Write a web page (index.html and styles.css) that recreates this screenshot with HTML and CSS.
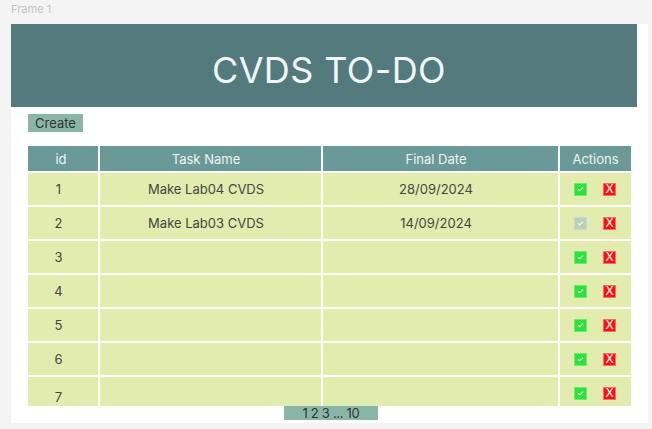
FILE: index.html
```html
<!DOCTYPE html>
<html>
<head>
<meta charset="utf-8">
<link rel="stylesheet" href="styles.css">
</head>
<body>
<div class="label">Frame 1</div>
<div class="frame">
  <header class="banner"><h1>CVDS TO-DO</h1></header>
  <button class="create">Create</button>
  <div class="table">
    <div class="th shift-s">id</div><div class="th shift">Task Name</div><div class="th shift">Final Date</div><div class="th">Actions</div>

    <div class="td shift">1</div><div class="td shift">Make Lab04 CVDS</div><div class="td shift">28/09/2024</div>
    <div class="td actions"><span class="ok"><svg viewBox="0 0 12 12"><polyline points="3.2,6.3 5.2,8 8.8,4.4"/></svg></span><span class="del">X</span></div>

    <div class="td shift">2</div><div class="td shift">Make Lab03 CVDS</div><div class="td shift">14/09/2024</div>
    <div class="td actions"><span class="ok done"><svg viewBox="0 0 12 12"><polyline points="3.2,6.3 5.2,8 8.8,4.4"/></svg></span><span class="del">X</span></div>

    <div class="td shift">3</div><div class="td"></div><div class="td"></div>
    <div class="td actions"><span class="ok"><svg viewBox="0 0 12 12"><polyline points="3.2,6.3 5.2,8 8.8,4.4"/></svg></span><span class="del">X</span></div>

    <div class="td shift">4</div><div class="td"></div><div class="td"></div>
    <div class="td actions"><span class="ok"><svg viewBox="0 0 12 12"><polyline points="3.2,6.3 5.2,8 8.8,4.4"/></svg></span><span class="del">X</span></div>

    <div class="td shift">5</div><div class="td"></div><div class="td"></div>
    <div class="td actions"><span class="ok"><svg viewBox="0 0 12 12"><polyline points="3.2,6.3 5.2,8 8.8,4.4"/></svg></span><span class="del">X</span></div>

    <div class="td shift">6</div><div class="td"></div><div class="td"></div>
    <div class="td actions"><span class="ok"><svg viewBox="0 0 12 12"><polyline points="3.2,6.3 5.2,8 8.8,4.4"/></svg></span><span class="del">X</span></div>

    <div class="td shift last">7</div><div class="td"></div><div class="td"></div>
    <div class="td actions"><span class="ok"><svg viewBox="0 0 12 12"><polyline points="3.2,6.3 5.2,8 8.8,4.4"/></svg></span><span class="del">X</span></div>
  </div>
  <div class="pager">1 2 3 ... 10</div>
</div>
</body>
</html>
```

FILE: styles.css
```css
* { box-sizing: border-box; }
body {
  margin: 0;
  background: #f4f4f4;
  font-family: Inter, "Noto Sans", sans-serif;
  color: #444;
}
.label {
  height: 24px;
  padding: 3px 0 0 11px;
  font-size: 11px;
  line-height: 13px;
  color: #c2c2c2;
}
.frame {
  margin-left: 11px;
  width: 637px;
  height: 399px;
  background: #fff;
  display: flex;
  flex-direction: column;
}
.banner {
  width: 626px;
  height: 83px;
  background: #537a7c;
  display: flex;
  align-items: center;
  justify-content: center;
}
.banner h1 {
  margin: 8px 0 0 10px;
  font-weight: 400;
  font-size: 36px;
  color: #f2f6f6;
  letter-spacing: 0.4px;
}
.create {
  align-self: flex-start;
  margin: 7px 0 0 17px;
  width: 55px;
  height: 18px;
  padding: 0;
  border: 0;
  background: #8ab6a8;
  font-family: Inter, "Noto Sans", sans-serif;
  font-size: 13px;
  color: #333;
}
.table {
  margin: 14px 0 0 17px;
  width: 603px;
  height: 260px;
  overflow: hidden;
  display: grid;
  grid-template-columns: 70px 221px 235px 71px;
  grid-template-rows: 25px;
  grid-auto-rows: 32px;
  gap: 2px;
}
.th {
  background: #6a9a98;
  color: #eef4f3;
  font-size: 13px;
  display: flex;
  align-items: center;
  justify-content: center;
  padding-top: 1px;
}
.td {
  background: #e2ecae;
  font-size: 13px;
  color: #454545;
  display: flex;
  align-items: center;
  justify-content: center;
}
.shift { padding-right: 9px; }
.shift-s { padding-right: 4px; }
.td.last { padding-top: 8px; }
.actions { gap: 16px; padding-right: 1px; }
.ok, .del {
  width: 13px;
  height: 13px;
  display: flex;
  align-items: center;
  justify-content: center;
}
.ok { background: #2de23a; border: 1px solid #66ee6e; }
.ok.done { background: #b9d0bc; border-color: #c8dacb; }
.ok svg { width: 12px; height: 12px; fill: none; stroke: #fff; stroke-width: 1.2; }
.del {
  background: #ff1010;
  border: 1px solid #ff6a6a;
  color: #fff;
  font-size: 12px;
  line-height: 1;
  font-family: "DejaVu Sans", sans-serif;
}
.pager {
  align-self: center;
  margin-left: 3px;
  width: 94px;
  height: 14px;
  background: #8ab6a8;
  font-size: 13px;
  line-height: 14px;
  text-align: center;
  color: #333;
  letter-spacing: -0.3px;
}
```
